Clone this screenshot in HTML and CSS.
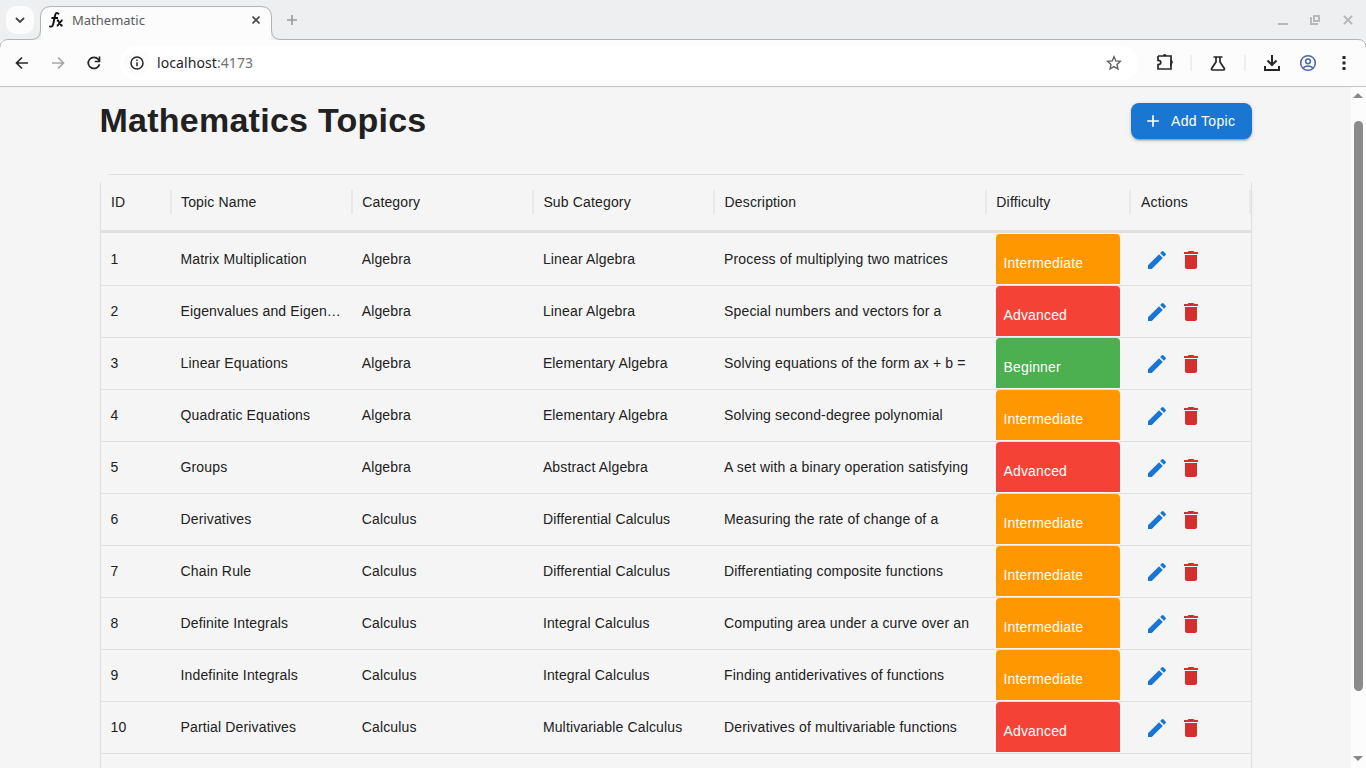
FILE: index.html
```html
<!DOCTYPE html>
<html lang="en">
<head>
<meta charset="utf-8">
<title>Mathematic</title>
<link rel="stylesheet" href="styles.css">
</head>
<body>
<svg class="defs" width="0" height="0">
  <symbol id="edit" viewBox="0 0 24 24"><path d="M3 17.250V21h3.750L17.810 9.940l-3.750-3.750zM20.710 7.040c.39-.39.39-1.020 0-1.410l-2.340-2.340a.9959.9959 0 0 0-1.410 0l-1.830 1.830 3.750 3.750z"/></symbol>
  <symbol id="delete" viewBox="0 0 24 24"><path d="M6 19c0 1.100.9 2 2 2h8c1.100 0 2-.9 2-2V7H6zM19 4h-3.500l-1-1h-5l-1 1H5v2h14z"/></symbol>
</svg>
<header class="tabstrip">
  <button class="tab-search"><svg width="10" height="6" viewBox="0 0 10 6"><path d="M1 1l4 4 4-4"/></svg></button>
  <div class="tab">
    <svg class="curve" width="231" height="40" viewBox="0 0 231 40"><path d="M-41 47.500C-41 42-37 39.500-33 39.500H-10Q-.5 39.500-.5 30V17Q-.5 6.500 10 6.500H220Q230.500 6.500 230.500 17V30Q230.500 39.500 240 39.500H1317Q1325 39.500 1325 47.500"/></svg>
    <svg class="favicon" width="16" height="18" viewBox="0 0 16 18"><path d="M10 3.300Q7.300.2 6.200 4L4.200 13Q3.300 17 .3 15M2.500 7H9" stroke-width="1.900"/><path d="M7.800 9.500h1.300l3.200 5h1.300M13.600 9.500h-.8l-4.200 5h-.8" stroke-width="1.800"/></svg>
    <span class="tab-title">Mathematic</span>
    <svg class="tab-close" width="8" height="8" viewBox="0 0 8 8"><path d="M.5.500l7 7m0-7l-7 7"/></svg>
  </div>
  <svg class="new-tab" width="12" height="12" viewBox="0 0 12 12"><path d="M6 1v10M1 6h10"/></svg>
  <div class="window-buttons">
    <svg width="10" height="12" viewBox="0 0 10 12"><path d="M0 10h10"/></svg>
    <svg width="10" height="12" viewBox="0 0 10 12"><path d="M4 2h5v5H4zM1 3v7h7"/></svg>
    <svg width="10" height="12" viewBox="0 0 10 12"><path d="M1 2l8 8m0-8l-8 8"/></svg>
  </div>
</header>
<nav class="toolbar">
  <div class="nav-buttons">
    <svg width="16" height="16" viewBox="0 0 16 16"><path d="M14 8H3M8 2.500L2.500 8 8 13.500"/></svg>
    <svg class="muted" width="16" height="16" viewBox="0 0 16 16"><path d="M2 8h11M8 2.500L13.500 8 8 13.500"/></svg>
    <svg width="16" height="16" viewBox="0 0 16 16"><path d="M13.500 9.200A5.700 5.500 0 1 1 12.400 4.500L13.500 6M13.500 1.500v5H8.700"/></svg>
  </div>
  <div class="address">
    <span class="site-info"><svg width="14" height="14" viewBox="0 0 14 14"><circle cx="7" cy="7" r="6"/><path d="M7 6.200v4M7 3.500v1.400"/></svg></span>
    <span class="url">localhost<i>:4173</i></span>
    <svg class="star" width="16" height="16" viewBox="0 0 16 16"><path d="M8 1.700l1.800 4.200 4.700.4-3.500 3.100 1 4.600L8 11.600 4 14l1-4.600-3.500-3.100 4.700-.4z"/></svg>
  </div>
  <div class="tools">
    <svg class="puzzle" width="18" height="18" viewBox="0 0 18 18"><path d="M2 3h13v5.200M15 9.800V16H2v-4.300q2.800 0 2.800-2.200T2 7.300V3"/><path d="M15 7v6"/><path class="fill" d="M6.800 3a1.900 1.900 0 0 1 3.800 0zM15 7.200a1.900 1.900 0 0 1 0 3.800z"/></svg>
    <i class="divider"></i>
    <svg width="18" height="18" viewBox="0 0 18 18"><path d="M4.500 3h9M7 3v5L2.700 14.500Q2.200 16 3.500 16h11Q15.800 16 15.300 14.500L11 8V3"/></svg>
    <i class="divider"></i>
    <svg width="18" height="18" viewBox="0 0 18 18"><path class="bold" d="M9 1v9.500M4.500 6.500L9 11l4.500-4.500M2 12v4h14v-4"/></svg>
    <svg class="profile" width="18" height="18" viewBox="0 0 18 18"><circle cx="9" cy="9" r="7.300"/><circle cx="9" cy="7.300" r="2.400"/><path d="M3.800 14q5.200-4 10.400 0"/></svg>
    <svg width="18" height="18" viewBox="0 0 18 18"><path class="fill" d="M7.500 2h3v3h-3zM7.500 7.500h3v3h-3zM7.500 13h3v3h-3z"/></svg>
  </div>
</nav>
<div class="viewport">
  <main class="page">
    <div class="heading">
      <h1>Mathematics Topics</h1>
      <button class="add"><svg width="20" height="20" viewBox="0 0 24 24"><path d="M19 13h-6v6h-2v-6H5v-2h6V5h2v6h6z"/></svg>Add Topic</button>
    </div>
    <section class="grid">
      <div class="row head"><span>ID</span><span>Topic Name</span><span>Category</span><span>Sub Category</span><span>Description</span><span>Difficulty</span><span>Actions</span></div>
      <div id="rows"></div>
    </section>
  </main>
  <aside class="scrollbar">
    <svg width="10" height="5" viewBox="0 0 10 5"><path d="M0 5L5 0l5 5z"/></svg>
    <i class="thumb"></i>
    <svg width="10" height="5" viewBox="0 0 10 5"><path d="M0 0l5 5 5-5z"/></svg>
  </aside>
</div>
<script src="script.js"></script>
</body>
</html>
```

FILE: styles.css
```css
* { box-sizing: border-box; }
body { margin: 0; height: 768px; overflow: hidden; display: flex; flex-direction: column; background: #f5f5f5; font: 14px "Liberation Sans", Arial, sans-serif; color: #212121; }
button { border: 0; padding: 0; font: inherit; }
svg { display: block; flex: none; }
.defs { position: absolute; }

.tabstrip { height: 40px; flex: none; display: flex; background: #eeeff1; font-family: "Noto Sans", sans-serif; }
.tab-search { width: 28px; height: 28px; margin: 6px 0 0 6px; border-radius: 10px; background: #fcfcfc; display: grid; place-items: center; position: relative; z-index: 2; }
.tab-search svg { fill: none; stroke: #444; stroke-width: 1.8; }
.tab { position: relative; width: 231px; height: 40px; margin-left: 7px; display: flex; align-items: center; padding: 0 12px 0 8px; }
.curve { position: absolute; left: 0; top: 0; overflow: visible; fill: none; stroke: #b2b3b5; z-index: 1; }
.tab::before { content: ""; position: absolute; left: 0; right: 1px; top: 7px; bottom: 0; background: #fcfcfc; border-radius: 10px 10px 0 0; }
.favicon { position: relative; fill: none; stroke: #111; margin-top: -1px; }
.tab-title { position: relative; margin-left: 7px; flex: 1; font-size: 13px; color: #5b5c5e; }
.tab-close { position: relative; fill: none; stroke: #4a4b4c; stroke-width: 1.6; }
.new-tab { margin: 14px 0 0 14px; stroke: #9b9c9e; stroke-width: 1.7; }
.window-buttons { margin: 14px 13px 0 auto; display: flex; gap: 23px; fill: none; stroke: #b8b9ba; stroke-width: 2; }
.window-buttons svg:first-child { margin-right: -1px; }

.toolbar { height: 47px; flex: none; display: flex; align-items: center; background: #fcfcfc; border-bottom: 1px solid #c1c2c8; padding: 0 13px 0 14px; fill: none; stroke: #252628; }
.nav-buttons { display: flex; gap: 20px; width: 106px; stroke-width: 1.7; }
.muted { stroke: #a5a6a7; }
.address { width: 1018px; height: 34px; border-radius: 17px; background: #fff; display: flex; align-items: center; padding: 0 16px 0 4px; }
.site-info { width: 26px; height: 26px; border-radius: 13px; background: #fcfcfc; display: grid; place-items: center; stroke-width: 1.5; }
.url { margin: -2px 0 0 7px; flex: 1; font: 14px "Noto Sans", sans-serif; letter-spacing: .08px; color: #242528; }
.url i { font-style: normal; color: #717274; }
.star { stroke: #5b5c5e; stroke-width: 1.3; }
.tools { display: flex; align-items: center; margin-left: auto; gap: 18px; stroke-width: 1.7; }
.tools .fill { fill: #252628; stroke: none; }
.tools .bold { stroke-width: 2; }
.tools .divider { width: 2px; height: 16px; background: #eeeeef; margin: 0 -1px; }
.tools .puzzle { margin: -2px -1px 0 1px; }
.tools .profile { stroke: #4864a8; stroke-width: 1.5; }

.viewport { flex: 1; min-height: 0; display: flex; }
.page { flex: 1; padding: 16px 99px 0 100px; overflow: hidden; }
.heading { display: flex; justify-content: space-between; height: 36px; align-items: center; }
h1 { margin: -2px 0 0 -.5px; font-size: 34px; font-weight: bold; line-height: 42px; letter-spacing: .25px; }
.add { width: 121px; height: 36px; border-radius: 8px; background: #1976d2; color: #fff; display: flex; align-items: center; padding-left: 12px; gap: 8px; font-size: 14px; letter-spacing: .35px; box-shadow: 0 3px 1px -2px rgba(0,0,0,.2), 0 2px 2px rgba(0,0,0,.14), 0 1px 5px rgba(0,0,0,.12); }
.add svg { fill: #fff; }
.grid { position: relative; margin-top: 35px; height: 700px; border: 1px solid #f5f5f5; border-radius: 12px; box-shadow: 0 6px 4px -1px rgba(0,0,0,.07); background: #f5f5f5; letter-spacing: .15px; }
.grid::before { content: ""; position: absolute; left: 7px; right: 7px; top: -1px; height: 1px; background: #e0e0e0; }
.grid::after { content: ""; position: absolute; inset: 7px -1px 0; border: solid #e0e0e0; border-width: 0 1px; pointer-events: none; }
.row { display: grid; grid-template-columns: 70px 181.2px 181.2px 181.2px 271.8px 144.7px 1fr; height: 52px; border-bottom: 1px solid #e0e0e0; }
.row > span { padding: 0 10px 0 9.5px; line-height: 50px; white-space: nowrap; }
.head { height: 58px; border-bottom: 3px solid #e0e0e0; margin-bottom: 1px; align-items: center; padding-bottom: 1px; }
.head > span { height: 24px; line-height: 24px; padding-left: 10px; border-right: 2px solid #e9e9e9; margin-right: -1px; }
.head > span:nth-child(4), .head > span:nth-child(6), .head > span:last-child { margin-right: 0; }
.row .badge { height: 50px; width: 124px; margin-left: 10px; padding: 8px 7.2px 0; border-radius: 4px 4px 0 0; color: #fff; line-height: 42px; }
.Intermediate { background: #ff9800; }
.Advanced { background: #f44336; }
.Beginner { background: #4caf50; }
.actions { display: flex; align-items: center; padding-left: 14px; gap: 10px; }
.edit { fill: #1976d2; }
.delete { fill: #d32f2f; }

.scrollbar { width: 15px; background: #fcfcfc; display: flex; flex-direction: column; align-items: center; padding: 6px 0 7px; fill: #878787; }
.scrollbar svg { margin-right: 1px; }
.thumb { width: 9px; height: 570px; margin: 23px 0 auto; border-radius: 5px; background: #8b8b8b; }
```

FILE: script.js
```js
const topics = [
  ["Matrix Multiplication", "Algebra", "Linear Algebra", "Process of multiplying two matrices", "Intermediate"],
  ["Eigenvalues and Eigen…", "Algebra", "Linear Algebra", "Special numbers and vectors for a", "Advanced"],
  ["Linear Equations", "Algebra", "Elementary Algebra", "Solving equations of the form ax + b =", "Beginner"],
  ["Quadratic Equations", "Algebra", "Elementary Algebra", "Solving second-degree polynomial", "Intermediate"],
  ["Groups", "Algebra", "Abstract Algebra", "A set with a binary operation satisfying", "Advanced"],
  ["Derivatives", "Calculus", "Differential Calculus", "Measuring the rate of change of a", "Intermediate"],
  ["Chain Rule", "Calculus", "Differential Calculus", "Differentiating composite functions", "Intermediate"],
  ["Definite Integrals", "Calculus", "Integral Calculus", "Computing area under a curve over an", "Intermediate"],
  ["Indefinite Integrals", "Calculus", "Integral Calculus", "Finding antiderivatives of functions", "Intermediate"],
  ["Partial Derivatives", "Calculus", "Multivariable Calculus", "Derivatives of multivariable functions", "Advanced"]
];
document.getElementById("rows").innerHTML = topics.map(([name, category, sub, text, level], i) =>
  `<div class="row"><span>${i + 1}</span><span>${name}</span><span>${category}</span><span>${sub}</span><span>${text}</span><span class="badge ${level}">${level}</span><div class="actions"><svg class="edit" width="24" height="24"><use href="#edit"/></svg><svg class="delete" width="24" height="24"><use href="#delete"/></svg></div></div>`
).join("");
```
